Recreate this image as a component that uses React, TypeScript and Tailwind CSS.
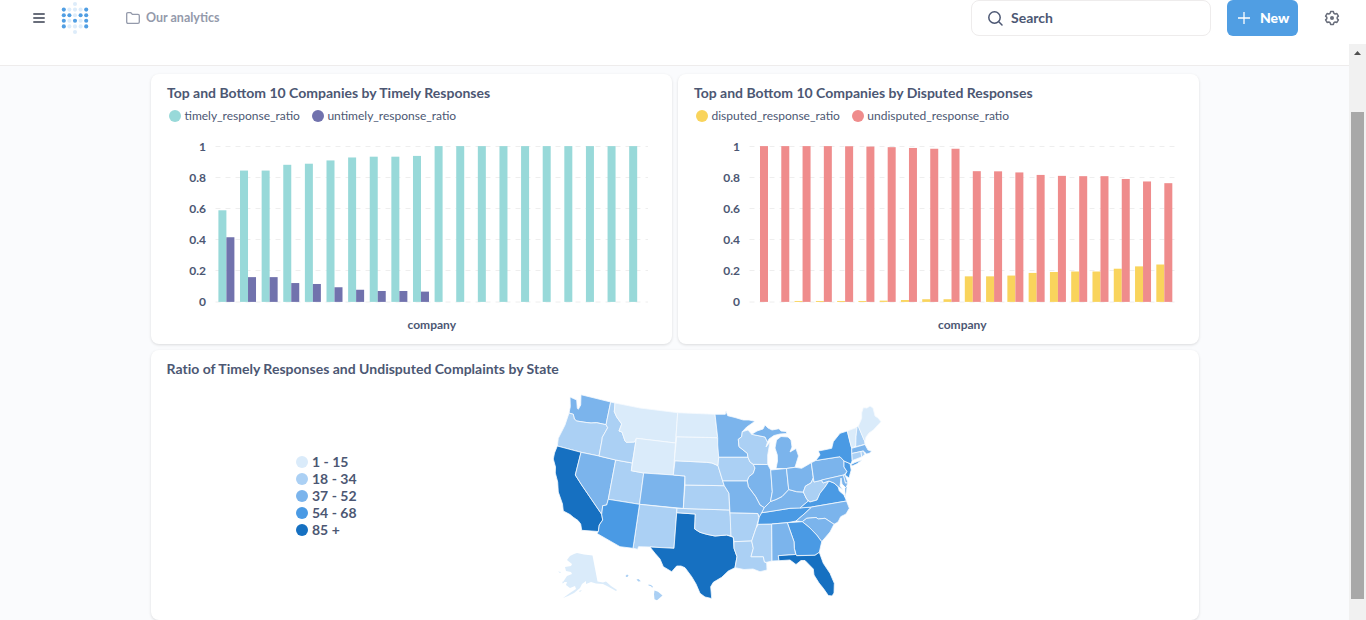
import React from 'react';

const MINT = '#98d9d9';
const PURPLE = '#7172ad';
const YELLOW = '#f9d45c';
const CORAL = '#ef8c8c';

type Series = { name: string; color: string; values: number[] };
type ChartProps = {
  title: string;
  series: [Series, Series];
  left: number;
  right: number;
  firstBar: number;
  step: number;
};

const timely: [Series, Series] = [
  {
    name: 'timely_response_ratio',
    color: MINT,
    values: [0.588, 0.843, 0.843, 0.88, 0.887, 0.908, 0.927, 0.932, 0.932, 0.937, 1, 1, 1, 1, 1, 1, 1, 1, 1, 1],
  },
  {
    name: 'untimely_response_ratio',
    color: PURPLE,
    values: [0.415, 0.159, 0.159, 0.121, 0.115, 0.094, 0.078, 0.07, 0.07, 0.066, 0, 0, 0, 0, 0, 0, 0, 0, 0, 0],
  },
];

const disputed: [Series, Series] = [
  {
    name: 'disputed_response_ratio',
    color: YELLOW,
    values: [0, 0, 0.006, 0.006, 0.006, 0.006, 0.008, 0.012, 0.017, 0.017, 0.164, 0.164, 0.169, 0.186, 0.192, 0.195, 0.195, 0.213, 0.228, 0.24],
  },
  {
    name: 'undisputed_response_ratio',
    color: CORAL,
    values: [1, 1, 1, 1, 0.999, 0.997, 0.993, 0.988, 0.983, 0.983, 0.839, 0.838, 0.831, 0.815, 0.809, 0.807, 0.807, 0.789, 0.773, 0.762],
  },
];

const TICKS = [
  { label: '1', y: 26.5 },
  { label: '0.8', y: 57.5 },
  { label: '0.6', y: 88.5 },
  { label: '0.4', y: 119.5 },
  { label: '0.2', y: 150.5 },
  { label: '0', y: 182 },
];

function BarCard({ title, series, left, right, firstBar, step }: ChartProps) {
  return (
    <section className="h-[270px] w-[521px] shrink-0 overflow-hidden rounded-lg bg-white shadow-[0_1px_3px_rgba(0,0,0,0.13)]">
      <h2 className="h-[37px] pl-4 pt-[9px] text-[14px] leading-5 font-bold text-[#4c5773]">{title}</h2>
      <div className="flex h-[9px] items-center gap-3 pl-[18px] text-[12px] text-[#4c5773]">
        {series.map((s) => (
          <span key={s.name} className="flex items-center gap-[3.5px] leading-4">
            <i className="h-3 w-3 rounded-full" style={{ background: s.color }} />
            <span className="pt-px">{s.name}</span>
          </span>
        ))}
      </div>
      <svg className="block h-[224px] w-[521px]" viewBox="0 0 521 224">
        {TICKS.map((t) => (
          <g key={t.label}>
            <line x1={left} x2={right} y1={t.y} y2={t.y} stroke="#eeeeee" strokeDasharray="5 5" />
            <text x={left - 9.5} y={t.y + 4} textAnchor="end" fontSize="12" fontWeight="700" fill="#4c5773">
              {t.label}
            </text>
          </g>
        ))}
        {series.map((s, k) =>
          s.values.map((v, i) =>
            v > 0 ? (
              <rect
                key={`${k}-${i}`}
                x={firstBar + i * step + k * 8}
                y={181.9 - v * 155.8}
                width={8}
                height={v * 155.8}
                fill={s.color}
              />
            ) : null,
          ),
        )}
        <text x={(left + right) / 2} y="209" textAnchor="middle" fontSize="12" fontWeight="700" fill="#4c5773">
          company
        </text>
      </svg>
    </section>
  );
}

const C1 = '#daebfa';
const C2 = '#abd0f4';
const C3 = '#7bb4ec';
const C4 = '#4a9ae4';
const C5 = '#1670c1';

const STATES: [string, string, string][] = [
  ['WA', C3, '570,397 576.7,400 577.3,408.3 578.3,409.3 580.7,405 581,394.7 610.7,402 606,424.7 596.7,422.7 591,423 585,422.3 576.7,421 574.3,419 573.3,414.3 569,413 570.3,406.7'],
  ['OR', C2, '569,413 573.3,414.3 574.3,419 576.7,421 585,422.3 591,423 596.7,422.7 606,424.7 607.7,427.7 602.3,437.3 602,440 599,456 581,452.3 557.3,446 558.3,438.3 562,431 565,425'],
  ['CA', C5, '557.3,446 581,452.3 575.3,475 581.7,485 601.7,514.3 602.7,520 599.3,525 598.3,531.5 581.7,530.3 580.7,524 578,520.5 573.3,517.3 570,514.5 563.3,511 562.5,504 558.3,492 557.7,482 555.3,473 555.5,467 553.3,459 554.5,453'],
  ['NV', C3, '581,452.3 599,456 615.7,460 608.3,499.3 606.7,505 602.7,505.7 601.7,514.3 581.7,485 575.3,475'],
  ['UT', C2, '615.7,460 632.3,463 631.3,470.7 643.7,473 639.5,504.3 608.3,499.3'],
  ['ID', C2, '610.7,402 615,403 614.3,411.7 616.7,417 621.7,424 619,431 622,432 625,441 626.5,442.3 634.5,442 636.3,438.3 632.3,463 615.7,460 599,456 602,440 602.3,437.3 607.7,427.7 606,424.7'],
  ['MT', C1, '615,403 640,408 660,410.5 677.7,412.7 675.5,443 636.3,438.3 634.5,442 626.5,442.3 625,441 622,432 619,431 621.7,424 616.7,417 614.3,411.7'],
  ['WY', C1, '636.3,438.3 675.5,443 673.3,475 643.7,473 631.3,470.7'],
  ['CO', C3, '643.7,473 673.3,475 685,476 683.3,508.5 639.5,504.3'],
  ['NM', C2, '639.5,504.3 677,508.3 674,548.3 650,547 638.5,546.7 637.7,549.3 633,548.3'],
  ['AZ', C4, '608.3,499.3 639.5,504.3 633,548.3 620,546.7 597,533.5 598.3,531.5 599.3,525 602.7,520 601.7,514.3 602.7,505.7 606.7,505'],
  ['TX', C5, '676.7,512.7 695.3,514 694.7,529 700,532.3 706.7,534.3 715,536 726.7,535 733.3,537.3 734,548.3 737,556.7 735,567.7 728.3,571 721.7,577.3 713.3,582.3 710.7,586.7 711.7,598.5 705,597 700,593.3 696,584 691.7,576.7 685,567.7 681,566 676.7,566 671.7,571.7 663.3,566.7 660,559 655,553.3 650,547 674,548.3'],
  ['OK', C2, '677,508.3 683.3,508.5 729.5,510 731,520 731,536 726.7,535 715,536 706.7,534.3 700,532.3 694.7,529 695.3,514 676.7,512.7'],
  ['KS', C2, '685,485 724.3,485.7 729,493.3 729.5,510 683.3,508.5'],
  ['NE', C2, '675,460.7 706.7,462.3 712,463 718,465.7 722.7,481 724.3,485.7 685,485 685,476 673.3,475'],
  ['SD', C1, '676.7,436.7 717.7,437.7 718.7,457.3 718,465.7 712,463 706.7,462.3 674.3,460.7'],
  ['ND', C1, '677.7,412.7 715,414.3 717.7,437.7 676,436.7'],
  ['MN', C3, '715,414.3 725.3,414.3 726,411 727.7,415.7 735,417.5 743.3,420 749,420 755,421.3 746.7,427 742.3,431.7 741.7,436.7 738.3,439.3 739,446.7 747.3,453.3 748,457.3 718.7,457.3 717.7,445 717.7,437.7'],
  ['IA', C2, '718.7,457.3 748,457.3 750,462 753.3,464.3 755,468 753.3,473.3 749,476.7 747.3,481 722.7,481 718,465.7'],
  ['WI', C2, '742.3,431.7 748,430 751.7,434.3 765,437 767.5,442 766,447 770,442 767.7,455 767.7,464.5 753.3,464.3 750,462 748,457.3 747.3,453.3 739,446.7 738.3,439.3 741.7,436.7'],
  ['MIU', C3, '751.7,434.3 757,431 763,429 765,425 768,428 772,430 779,428.7 781,431 786,431.5 787,433.5 780,434 774,435.5 769,439 767.5,442 765,437'],
  ['MI', C3, '776,468.5 777.5,461 777.3,455 775,448 776.5,440 781,436.5 788,437 791,440 792,447 790,452 796,448.5 798.5,456 795,467.3 786.5,468.5'],
  ['IL', C3, '753.3,464.5 767.7,464.5 770.7,470 772.3,491.7 770.5,501.5 764.3,507.7 760,505 755.7,496.7 748.3,486.7 747.3,481 749,476.7 753.3,473.3 755,468'],
  ['MO', C3, '722.7,481 747.3,481 748.3,486.7 755.7,496.7 760,505 764.3,507.7 761.7,513.3 759.3,517 757.7,513.5 730,513 729,493.3 724.3,485.7'],
  ['AR', C2, '730,513 757.7,513.5 759,517.5 756,528.3 751.7,541 734,541.7 733.3,537.3 731,536'],
  ['LA', C2, '734,541.7 751.7,541 753.3,548.3 751,556.7 763.3,556.7 764.5,562 766.7,563 767,570 760,571.7 753,569 744,569.5 735,567.7 737,556.7 734,548.3'],
  ['MS', C2, '758.3,524.3 771.7,524 772,561 766.7,562.3 764.5,562 763.3,556.7 751,556.7 753.3,548.3 751.7,541 756,528.3'],
  ['TN', C4, '761.7,512.7 770,511.5 790,508.3 811.7,507 805,513.3 796,521 787.3,522.7 771.7,524 757.7,524.3 759.3,517'],
  ['KY', C3, '764.3,507.7 770.5,501.5 776,499.5 782,496.5 788.7,489.5 796.7,491.7 803.3,492 806.7,499 808.3,501 800,508 790,508.3 770,511.5 761.7,512.7'],
  ['IN', C3, '770.7,470 786.5,468.5 788.7,489.5 782,496.5 776,499.5 770.5,501.5 772.3,491.7'],
  ['OH', C3, '786.5,468.5 795,467.3 801.7,468.3 811.3,462.7 813.3,478 811,483 805.5,486 803.3,492 796.7,491.7 788.7,489.5'],
  ['WV', C2, '813.3,478 814,482 821.5,480 823,483 829,481 825,487 820,493.3 817,500 810,502 806.7,499 803.3,492 805.5,486 811,483'],
  ['PA', C3, '811.3,462.7 815.7,460.5 840,456.7 844,461 844,467 847,471.5 844,475 814,482'],
  ['VA', C4, '829,481 834,483 838,486.5 839.3,491 844,495 846.5,501 811.7,507 800,508 808.3,501 810,502 817,500 820,493.3 825,487'],
  ['MD', C3, '821.5,480 843.5,475 845.5,483 848,482.5 846,488 842,484 841,478 840,486 843,490 838,486.5 834,483 829,481 823,483'],
  ['DVA', C4, '845,488 847,486 846.5,491 845,497'],
  ['DE', C3, '843.5,475 845,475 848,482.5 845.5,483'],
  ['NJ', C4, '844,461 850,463.5 851.2,470 849,478 845,475 847,471.5 844,467'],
  ['NY', C4, '815.7,460.5 820,455 818.3,451 826,449.5 831.7,448.3 833.3,441.7 840,433.3 847.3,431 850,442 851.7,448.3 852.2,460.5 851,464 844,461 840,456.7'],
  ['LI', C4, '851,464.5 855,462.5 862,460 857,463.7 852,466'],
  ['VT', C1, '847.3,431 857,427.3 856,436.7 855.7,446 851.7,448.3 850,442'],
  ['NH', C2, '857,427.3 858.3,426 864.3,440 865,444.3 855.7,446.7 856,436.7'],
  ['ME', C1, '858.3,426.3 861.7,418.3 861.7,413 863.3,407.7 867,408 870,406 873,408 875,416 878,418 881,421.7 877,426 873.3,430 869,433 866,437 865,441 864,440'],
  ['MA', C3, '851.7,448.3 865,444.5 868,450 871.5,451 870,453 866.7,454 863.3,451 851.8,453.5'],
  ['CT', C2, '851.8,453.5 861,451.5 861.7,457 852.3,460.5'],
  ['RI', C2, '861,451.5 863.3,451 865,454.5 861.7,457'],
  ['NC', C3, '811.7,507 846.5,501 849.3,508.3 846,514 840.7,516.7 838,522 834,524.3 825,518.3 818.3,519 816,517.5 806.7,518.3 802.3,521.7 796,521 805,513.3'],
  ['SC', C3, '802.3,521.7 806.7,518.3 816,517.5 818.3,519 825,518.3 834,524.3 830,532 821.7,541.7 816.7,535 810,528'],
  ['GA', C4, '787.3,522.7 802.3,521.7 810,528 816.7,535 821.7,541.7 819.3,552.3 815,555.3 796.3,555.5 794.3,548.3 794,541.7'],
  ['AL', C3, '771.7,524 787.3,522.7 794,541.7 794.3,548.3 795.7,554.5 778.3,555.7 779,560.7 772,561'],
  ['FL', C5, '778.3,555.7 795.7,554.5 796.7,555.7 815,555.3 819.3,552.3 823.3,563.3 830,573.3 834.3,583.3 834,593 832,596 828.3,595.5 823.3,588.3 819,583 814,575 813.3,569 805,560.5 801,560.5 796,564.5 790,560 779,560.7'],
];

const ALASKA =
  '577,553 584,554.5 592.5,555.5 597.5,581.5 603,582.5 606,581.5 611,586 617,590 616,591 608,586.5 603,584 596,583.5 591,582 586,584 586,581 582,584 580,588 574,593 568,596 563,598 570,593 576,589 575,586 570,588 566,585 567,582 563,582 567,576 572,574 571,572 566,571 565,567 571,566 572,564 567,560 570,556 574,554';

const LEGEND: [string, string][] = [
  ['1 - 15', C1],
  ['18 - 34', C2],
  ['37 - 52', C3],
  ['54 - 68', C4],
  ['85 +', C5],
];

function UsMap() {
  return (
    <svg className="h-[230px] w-[350px]" viewBox="545 382 350 230">
      <g stroke="#f6fafe" strokeWidth="0.8" strokeLinejoin="round">
        {STATES.map(([id, fill, points]) => (
          <polygon key={id} points={points} fill={fill} />
        ))}
      </g>
      <polygon points={ALASKA} fill={C1} />
      <path d="M558 571.5l3 .5-1 1zM562.5 581.5l2 1-2 1zM579 591l3-1-2 2z" fill={C1} />
      <path
        d="M625.5 576l1.500-1.500 1.500.8-.7 1.500-1.500.2zM636.500 579.500l2-.5 2.300 2.300-2.500.2zM648.500 584.500l2.500.5 2.200 2-1.200.6-1-1.300-2.500-.8zM654.500 590.500l3.500 1.200 4.500 3.800-5.500 4.800-2.500-1-.5-5z"
        fill={C2}
      />
    </svg>
  );
}

const LIGHT = '#ddecfa';
const BLUE = '#509ee3';
const LOGO = ['..o..', 'XoooX', 'XXoXX', 'XoXoX', 'XoooX', '..o..'];

function Logo() {
  return (
    <svg className="h-[34px] w-7" viewBox="0 0 28 34">
      {LOGO.map((row, r) =>
        row.split('').map((c, i) =>
          c === '.' ? null : (
            <circle key={`${r}-${i}`} cx={2.8 + i * 5.6} cy={3 + r * 5.6} r="2.05" fill={c === 'X' ? BLUE : LIGHT} />
          ),
        ),
      )}
    </svg>
  );
}

function Header() {
  return (
    <header className="flex h-11 shrink-0 items-start bg-white">
      <svg className="ml-[33px] mt-3 h-3 w-3" viewBox="0 0 12 12" stroke="#696e7b" strokeWidth="2.2" strokeLinecap="round">
        <path d="M1.100 2h9.800M1.100 6h9.800M1.100 10h9.800" />
      </svg>
      <div className="ml-4 mt-px">
        <Logo />
      </div>
      <div className="ml-[37px] mt-2 flex h-5 items-center gap-[6px] text-[12.5px] font-bold text-[#949aab]">
        <svg className="h-3 w-[14px]" viewBox="0 0 14 12" fill="none" stroke="#949aab" strokeWidth="1.3">
          <path d="M.7 10V1.900Q.7.700 1.900.700H4.800L6.400 2.400H12Q13.300 2.400 13.300 3.700V10Q13.300 11.300 12 11.300H2Q.7 11.300.7 10Z" />
        </svg>
        Our analytics
      </div>
      <div className="ml-auto flex h-9 w-60 items-center gap-2 rounded-lg border border-[#eeecec] pl-4 text-[14px] font-bold text-[#4c5773]">
        <svg className="h-[15px] w-[15px]" viewBox="0 0 15 15" fill="none" stroke="#4c5773" strokeWidth="1.5" strokeLinecap="round">
          <circle cx="6.5" cy="6.5" r="5.7" />
          <path d="M10.800 10.800l3.200 3.200" />
        </svg>
        <span className="pb-[2px]">Search</span>
      </div>
      <button className="ml-4 flex h-9 w-[71px] items-center gap-[10px] rounded-md bg-[#509ee3] pl-[11px] text-[14px] font-black text-white">
        <svg className="h-3 w-3" viewBox="0 0 12 12" stroke="#fff" strokeWidth="1.3">
          <path d="M6 0v12M0 6h12" />
        </svg>
        <span className="pb-[2px]">New</span>
      </button>
      <svg className="ml-[26px] mr-[26px] mt-[10px] h-4 w-4" viewBox="0 0 16 16" fill="none" stroke="#696e7b">
        <path
          d="M6.600 1.600h2.800l.5 1.700 1.300.7 1.700-.4 1.500 2.500-1.200 1.200v1.400l1.200 1.200-1.500 2.500-1.700-.4-1.300.7-.5 1.700H6.600l-.5-1.700-1.300-.7-1.700.4-1.500-2.500 1.200-1.200V7.300L1.600 6.100l1.500-2.500 1.700.4 1.300-.7z"
          strokeWidth="1.5"
          strokeLinejoin="round"
        />
        <circle cx="8" cy="8" r="2" fill="#696e7b" stroke="none" />
      </svg>
    </header>
  );
}

function Scrollbar() {
  return (
    <div className="flex w-[17px] shrink-0 flex-col items-center bg-[#f1f1f1]">
      <svg className="h-[17px] w-[17px]" viewBox="0 0 17 17" fill="#505050">
        <path d="M5 11h7L8.500 7z" />
      </svg>
      <div className="mt-[51px] h-[487px] w-[13px] bg-[#a8a8a8]" />
    </div>
  );
}

export default function App() {
  return (
    <div className="flex h-[620px] w-[1366px] flex-col overflow-hidden bg-white font-['Lato',sans-serif]">
      <Header />
      <div className="flex min-h-0 flex-1">
        <main className="flex min-w-0 flex-1 flex-col bg-[#fafbfd]">
          <div className="h-[22px] shrink-0 border-b border-[#eeecec] bg-white" />
          <div className="flex flex-col gap-[6px] pl-[151px] pt-2">
            <div className="flex gap-[6px]">
              <BarCard
                title="Top and Bottom 10 Companies by Timely Responses"
                series={timely}
                left={64.5}
                right={497}
                firstBar={67.4}
                step={21.62}
              />
              <BarCard
                title="Top and Bottom 10 Companies by Disputed Responses"
                series={disputed}
                left={71.5}
                right={497}
                firstBar={74}
                step={21.28}
              />
            </div>
            <section className="h-[270px] w-[1048px] shrink-0 rounded-lg bg-white shadow-[0_1px_3px_rgba(0,0,0,0.13)]">
              <h2 className="h-8 pl-[15.5px] pt-[9px] text-[14px] leading-5 font-bold tracking-[0.01px] text-[#4c5773]">
                Ratio of Timely Responses and Undisputed Complaints by State
              </h2>
              <div className="flex pl-[145px]">
                <ul className="mt-[71px] w-[249px]">
                  {LEGEND.map(([label, color]) => (
                    <li key={label} className="flex h-[17px] items-center gap-1 text-[14px] font-bold text-[#4c5773]">
                      <i className="h-3 w-3 rounded-full" style={{ background: color }} />
                      {label}
                    </li>
                  ))}
                </ul>
                <UsMap />
              </div>
            </section>
          </div>
        </main>
        <Scrollbar />
      </div>
    </div>
  );
}
